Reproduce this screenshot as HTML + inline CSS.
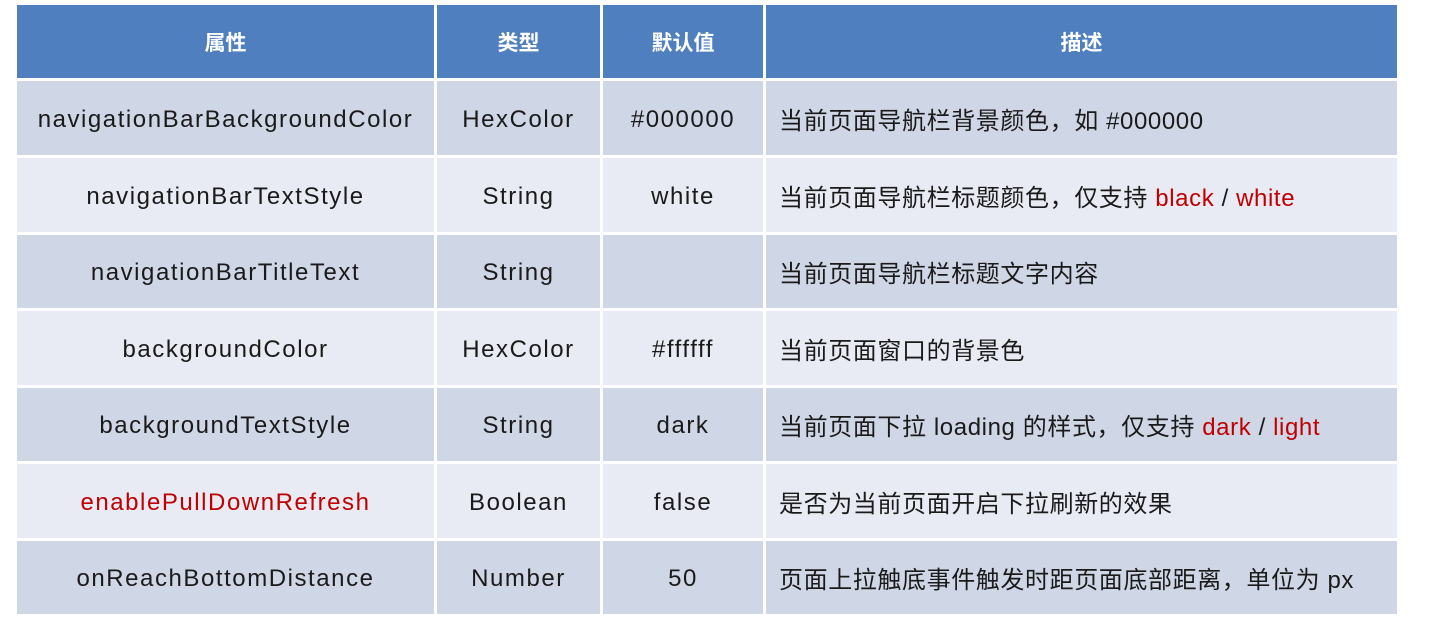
<!DOCTYPE html>
<html><head><meta charset="utf-8"><style>
body{margin:0;width:1438px;height:629px;background:#fff;position:relative;overflow:hidden;font-family:"Liberation Sans","Noto Sans CJK SC",sans-serif;}
.c{position:absolute;display:flex;align-items:center;justify-content:center;font-size:24px;letter-spacing:1.55px;color:#1a1a1a;box-sizing:border-box;white-space:pre;padding-top:3px;}
.h{background:#4f7fbe;color:#fff;font-weight:bold;font-size:21px;letter-spacing:0;top:5px;height:73px;padding-top:0;}
.l{justify-content:flex-start;padding-left:13px;padding-top:0;font-size:24px;letter-spacing:0.6px;}
.r{color:#c00000}
</style></head><body>
<div class="c h" style="left:17px;width:417px">属性</div>
<div class="c h" style="left:437px;width:163px">类型</div>
<div class="c h" style="left:603px;width:160px">默认值</div>
<div class="c h" style="left:766px;width:631px">描述</div>
<script>
var rows=[["navigationBarBackgroundColor","HexColor","#000000","当前页面导航栏背景颜色，如 #000000"],
["navigationBarTextStyle","String","white","当前页面导航栏标题颜色，仅支持 <span class=r>black</span> / <span class=r>white</span>"],
["navigationBarTitleText","String","","当前页面导航栏标题文字内容"],
["backgroundColor","HexColor","#ffffff","当前页面窗口的背景色"],
["backgroundTextStyle","String","dark","当前页面下拉 loading 的样式，仅支持 <span class=r>dark</span> / <span class=r>light</span>"],
["<span class=r>enablePullDownRefresh</span>","Boolean","false","是否为当前页面开启下拉刷新的效果"],
["onReachBottomDistance","Number","50","页面上拉触底事件触发时距页面底部距离，单位为 px"]];
var tops=[81,158,235,311,388,464,541],h="";
var cols=[[17,417],[437,163],[603,160],[766,631]];
rows.forEach(function(r,i){var bg=i%2?"#e8eaf4":"#cfd6e6";var ht=(i<6?tops[i+1]-3:614)-tops[i];
cols.forEach(function(c,j){h+='<div class="c'+(j==3?' l':'')+'" style="left:'+c[0]+'px;width:'+c[1]+'px;top:'+tops[i]+'px;height:'+ht+'px;background:'+bg+'"><span>'+r[j]+'</span></div>';});});
document.write(h);
</script>
</body></html>
